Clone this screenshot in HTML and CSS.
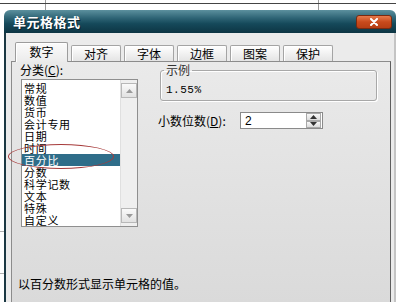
FILE: index.html
```html
<!DOCTYPE html>
<html lang="zh-CN">
<head>
  <meta charset="UTF-8" />
  <meta name="viewport" content="width=device-width, initial-scale=1.0"/>
  <title>单元格格式</title>
  <link rel="stylesheet" href="styles.css">
</head>
<body>

  <div class="dialog">
    <div class="titlebar">
      <span class="title">单元格格式</span>
      <button class="close">
        <svg width="10" height="8" viewBox="0 0 10 8"><path d="M2 1 L8 7 M8 1 L2 7" stroke="#fff" stroke-width="2" stroke-linecap="round"/></svg>
      </button>
    </div>

    <div class="frame">
      <div class="tabs">
        <div class="tab active">数字</div>
        <div class="tab">对齐</div>
        <div class="tab">字体</div>
        <div class="tab">边框</div>
        <div class="tab">图案</div>
        <div class="tab">保护</div>
      </div>

      <div class="pane">
        <div class="cols">
          <div class="left">
            <div class="label">分类(<u>C</u>):</div>
            <div class="listbox">
              <ul class="items">
                <li>常规</li>
                <li>数值</li>
                <li>货币</li>
                <li>会计专用</li>
                <li>日期</li>
                <li>时间</li>
                <li class="selected">百分比</li>
                <li>分数</li>
                <li>科学记数</li>
                <li>文本</li>
                <li>特殊</li>
                <li>自定义</li>
              </ul>
              <div class="scrollbar">
                <span class="sbtn"><svg width="7" height="4" viewBox="0 0 7 4"><path d="M0 4 L3.5 0 L7 4 Z" fill="#9a9a9a"/></svg></span>
                <span class="sbtn"><svg width="7" height="4" viewBox="0 0 7 4"><path d="M0 0 L3.5 4 L7 0 Z" fill="#9a9a9a"/></svg></span>
              </div>
            </div>
          </div>

          <div class="right">
            <fieldset class="sample">
              <legend>示例</legend>
              <div class="sample-value">1.55%</div>
            </fieldset>
            <div class="decimals">
              <span class="decimals-label">小数位数(<u>D</u>):</span>
              <div class="spin">
                <span class="spin-value">2</span>
                <div class="spin-btns">
                  <span class="spin-btn"><svg width="7" height="4" viewBox="0 0 7 4"><path d="M0 4 L3.5 0 L7 4 Z" fill="#333"/></svg></span>
                  <span class="spin-btn"><svg width="7" height="4" viewBox="0 0 7 4"><path d="M0 0 L3.5 4 L7 0 Z" fill="#333"/></svg></span>
                </div>
              </div>
            </div>
          </div>
        </div>

        <p class="desc">以百分数形式显示单元格的值。</p>
      </div>
    </div>
  </div>

  <!-- hand-drawn circle around the selected item -->
  <div class="mark"></div>

</body>
</html>
```

FILE: styles.css
```css
body {
  margin: 0;
  padding: 0;
  font-family: "Noto Sans CJK SC", "Liberation Sans", sans-serif;
  font-size: 12px;
  color: #000;
  background-color: #fff;
  background-image:
    linear-gradient(#444, #444),
    linear-gradient(#9a9a9a, #9a9a9a),
    linear-gradient(#9a9a9a, #9a9a9a),
    linear-gradient(#b0b0b0, #b0b0b0),
    linear-gradient(#b0b0b0, #b0b0b0);
  background-repeat: no-repeat;
  background-position: 0 3px, 45px 0, 318px 0, 0 231px, 0 273px;
  background-size: 396px 1px, 1px 10px, 1px 10px, 4px 1px, 4px 1px;
  overflow: hidden;
}

.dialog {
  width: 392px;
  height: 292px;
  margin: 10px 0 0 4px;
  display: flex;
  flex-direction: column;
  overflow: hidden;
}

.titlebar {
  height: 23px;
  flex: none;
  display: flex;
  align-items: center;
  padding: 0 4px 0 9px;
  border-radius: 6px 6px 0 0;
  background: linear-gradient(to bottom, #5c909e 0%, #2e6475 35%, #15495a 60%, #0d3543 100%);
}

.title {
  color: #fff;
  font-weight: bold;
  font-size: 13px;
  letter-spacing: 0.5px;
  text-shadow: 1px 1px 0 #0a2530;
}

.close {
  margin-left: auto;
  width: 36px;
  height: 14px;
  padding: 0;
  border: 1px solid #7a2a10;
  border-radius: 3px;
  background: linear-gradient(to bottom, #e67a4c, #c84a1c 50%, #b63e14);
  display: flex;
  align-items: center;
  justify-content: center;
}

.frame {
  flex: 1;
  display: flex;
  flex-direction: column;
  padding: 9px 3px 0 5px;
  background: #ebebeb;
  border-left: 2px solid #1b3843;
  border-right: 2px solid #c4c4c4;
}

.tabs {
  display: flex;
  align-items: flex-end;
  gap: 3px;
  height: 19px;
  padding-left: 4px;
  position: relative;
  z-index: 1;
}

.tab {
  width: 48px;
  height: 15px;
  line-height: 15px;
  text-align: center;
  background: linear-gradient(to bottom, #ffffff, #e4e4e4);
  border: 1px solid #a4a4a4;
  border-bottom: none;
  border-radius: 2px 2px 0 0;
  box-shadow: inset 1px 1px 0 #fff;
}

.tab.active {
  width: 51px;
  height: 19px;
  line-height: 17px;
  margin-bottom: -1px;
  background: linear-gradient(to bottom, #fbfbfb, #ebebeb);
  border-color: #9c9c9c;
}

.pane {
  flex: 1;
  border: 1px solid #8c8c8c;
  border-bottom: none;
  border-right-color: #5e5e5e;
  padding: 1px 0 0 6px;
  background: linear-gradient(to bottom, #eaeaea, #dadada);
}

.cols {
  display: flex;
}

.left {
  width: 120px;
}

.label {
  height: 14px;
  line-height: 14px;
  margin: 0 0 2px 2px;
}

.listbox {
  margin-left: 3px;
  width: 115px;
  height: 146px;
  border: 1px solid #8f8f8f;
  background: #fff;
  display: flex;
}

.items {
  list-style: none;
  margin: 0;
  padding: 2px 0 0;
  flex: 1;
}

.items li {
  height: 12px;
  line-height: 12px;
  padding-left: 2px;
  font-size: 11px;
  letter-spacing: 0.7px;
}

.items li.selected {
  background: #2f6d89;
  color: #fff;
}

.scrollbar {
  width: 16px;
  padding: 3px 0 3px 0;
  background: #efefef;
  border-left: 1px solid #e0e0e0;
  display: flex;
  flex-direction: column;
  justify-content: space-between;
  align-items: center;
}

.sbtn {
  width: 14px;
  height: 13px;
  border: 1px solid #b8b8b8;
  background: linear-gradient(to bottom, #fafafa, #e2e2e2);
  display: flex;
  align-items: center;
  justify-content: center;
}

.right {
  margin-left: 20px;
  flex: 1;
}

.sample {
  margin: 0 13px 0 2px;
  padding: 7px 3px 4px;
  border: 1px solid #a8a8a8;
  border-radius: 3px;
  box-shadow: inset 1px 1px 0 #fff, 1px 1px 0 #fff;
  min-inline-size: 0;
}

.sample legend {
  padding: 0 2px;
  line-height: 14px;
  color: #333;
}

.sample-value {
  line-height: 12px;
  padding-left: 2px;
  font-family: "Liberation Mono", monospace;
  font-size: 11px;
  letter-spacing: 0.5px;
}

.decimals {
  margin-top: 11px;
  display: flex;
  align-items: center;
}

.decimals-label {
  width: 82px;
}

.spin {
  width: 81px;
  height: 15px;
  border: 1px solid #8a8a8a;
  background: #fff;
  display: flex;
  align-items: center;
}

.spin-value {
  flex: 1;
  padding-left: 4px;
  font-family: "Liberation Sans", sans-serif;
  font-size: 12px;
}

.spin-btns {
  width: 15px;
  height: 15px;
  display: flex;
  flex-direction: column;
  margin-right: 1px;
}

.spin-btn {
  flex: 1;
  border: 1px solid #a8a8a8;
  background: linear-gradient(to bottom, #f8f8f8, #dcdcdc);
  display: flex;
  align-items: center;
  justify-content: center;
}

.desc {
  margin: 51px 0 0;
  line-height: 12px;
}

.mark {
  position: absolute;
  left: 8px;
  top: 144px;
  width: 104px;
  height: 23px;
  border: 1px solid #a63a3a;
  border-radius: 50%;
}
```
